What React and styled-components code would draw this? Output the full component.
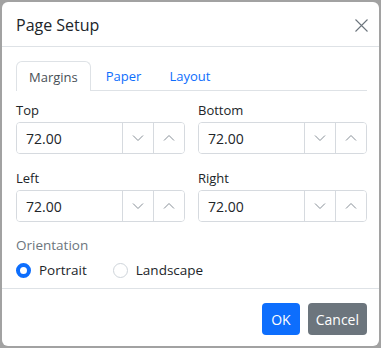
import { useState } from "react";
import styled, { createGlobalStyle } from "styled-components";

const GlobalStyle = createGlobalStyle`
  html, body {
    margin: 0;
    padding: 0;
    background: #a2a2a2;
  }
  body {
    padding: 2px 2px 2px 2px;
    font-family: "Segoe UI", "Open Sans", "Noto Sans", sans-serif;
    color: #212529;
  }
  * { box-sizing: border-box; }
`;

const Dialog = styled.div`
  width: 377px;
  height: 344px;
  background: #fff;
  border-radius: 6px;
  display: flex;
  flex-direction: column;
  overflow: hidden;
`;

const Header = styled.div`
  height: 45px;
  display: flex;
  align-items: center;
  justify-content: space-between;
  padding: 0 12px 0 14px;
  border-bottom: 1px solid #dee2e6;
`;

const Title = styled.h5`
  margin: 0;
  font-size: 16px;
  font-weight: 500;
  line-height: 22px;
  padding-top: 1px;
`;

const CloseButton = styled.button`
  border: none;
  background: none;
  padding: 0;
  width: 14px;
  height: 14px;
  display: flex;
  align-items: center;
  justify-content: center;
  margin-right: -1px;
  margin-top: 2px;
`;

const Body = styled.div`
  flex: 1;
  padding: 14px 12px 0 14px;
`;

const Tabs = styled.div`
  display: flex;
  border-bottom: 1px solid #dee2e6;
  height: 30px;
`;

const Tab = styled.button`
  border: 1px solid ${(p) => (p.active ? "#dee2e6" : "transparent")};
  border-bottom: none;
  border-radius: 6px 6px 0 0;
  background: #fff;
  margin-bottom: ${(p) => (p.active ? "-1px" : "0")};
  height: ${(p) => (p.active ? "30px" : "29px")};
  padding: 0 12px;
  margin-right: 2px;
  font-family: inherit;
  font-size: 13px;
  color: ${(p) => (p.active ? "#495057" : "#0d6efd")};
  cursor: pointer;
`;

const FieldGrid = styled.div`
  display: grid;
  grid-template-columns: minmax(0, 1fr) minmax(0, 1fr);
  column-gap: 13px;
  row-gap: 14px;
  margin-top: 9px;
`;

const Field = styled.div`
  display: flex;
  flex-direction: column;
  min-width: 0;
`;

const Label = styled.label`
  font-size: 13px;
  line-height: 20px;
  margin-bottom: 2px;
`;

const SpinGroup = styled.div`
  display: flex;
  height: 32px;
  border: 1px solid #d6dadf;
  border-radius: 4px;
  overflow: hidden;
`;

const SpinInput = styled.input`
  flex: 1;
  width: 0;
  min-width: 0;
  border: none;
  outline: none;
  padding: 0 9px;
  font-family: inherit;
  font-size: 14px;
  color: #212529;
`;

const SpinButton = styled.button`
  width: 31px;
  flex: none;
  border: none;
  border-left: 1px solid #d6dadf;
  background: #fff;
  padding: 0;
  display: flex;
  align-items: center;
  justify-content: center;
`;

const SectionLabel = styled.div`
  margin-top: 13px;
  font-size: 13.5px;
  line-height: 20px;
  color: #6c757d;
`;

const RadioRow = styled.div`
  display: flex;
  gap: 26px;
  margin-top: 5px;
  height: 20px;
  align-items: center;
`;

const RadioOption = styled.label`
  display: flex;
  align-items: center;
  gap: 8px;
  font-size: 13.5px;
  color: #212529;
  cursor: pointer;
`;

const RadioDot = styled.span`
  width: 15px;
  height: 15px;
  border-radius: 50%;
  background: #fff;
  border: ${(p) => (p.checked ? "4px solid #0d6efd" : "1px solid #ced4da")};
`;

const Footer = styled.div`
  height: 58px;
  border-top: 1px solid #dee2e6;
  display: flex;
  justify-content: flex-end;
  align-items: flex-start;
  gap: 8px;
  padding: 14px 12px 0 14px;
`;

const Button = styled.button`
  height: 32px;
  border: none;
  border-radius: 4px;
  padding: 0 ${(p) => p.pad}px;
  background: ${(p) => p.bg};
  color: #fff;
  font-family: inherit;
  font-size: 14px;
`;

const Chevron = ({ up }) => (
  <svg width="12" height="8" viewBox="0 0 12 8" fill="none">
    <path
      d={up ? "M1 6.5 L6 1.5 L11 6.5" : "M1 1.5 L6 6.5 L11 1.5"}
      stroke="#868e96"
      strokeWidth="1"
    />
  </svg>
);

function Spinner({ label, value }) {
  return (
    <Field>
      <Label>{label}</Label>
      <SpinGroup>
        <SpinInput defaultValue={value} />
        <SpinButton>
          <Chevron />
        </SpinButton>
        <SpinButton>
          <Chevron up />
        </SpinButton>
      </SpinGroup>
    </Field>
  );
}

export default function App() {
  const [tab, setTab] = useState("Margins");
  const [orientation, setOrientation] = useState("portrait");

  return (
    <>
      <GlobalStyle />
      <Dialog>
        <Header>
          <Title>Page Setup</Title>
          <CloseButton>
            <svg width="13" height="13" viewBox="0 0 13 13">
              <path d="M0.5 0.5 L12.5 12.5 M12.5 0.5 L0.5 12.5" stroke="#6c757d" strokeWidth="1.1" />
            </svg>
          </CloseButton>
        </Header>
        <Body>
          <Tabs>
            {["Margins", "Paper", "Layout"].map((t) => (
              <Tab key={t} active={tab === t} onClick={() => setTab(t)}>
                {t}
              </Tab>
            ))}
          </Tabs>
          <FieldGrid>
            <Spinner label="Top" value="72.00" />
            <Spinner label="Bottom" value="72.00" />
            <Spinner label="Left" value="72.00" />
            <Spinner label="Right" value="72.00" />
          </FieldGrid>
          <SectionLabel>Orientation</SectionLabel>
          <RadioRow>
            <RadioOption onClick={() => setOrientation("portrait")}>
              <RadioDot checked={orientation === "portrait"} />
              Portrait
            </RadioOption>
            <RadioOption onClick={() => setOrientation("landscape")}>
              <RadioDot checked={orientation === "landscape"} />
              Landscape
            </RadioOption>
          </RadioRow>
        </Body>
        <Footer>
          <Button bg="#0d6efd" pad={9}>OK</Button>
          <Button bg="#6c757d" pad={8}>Cancel</Button>
        </Footer>
      </Dialog>
    </>
  );
}
